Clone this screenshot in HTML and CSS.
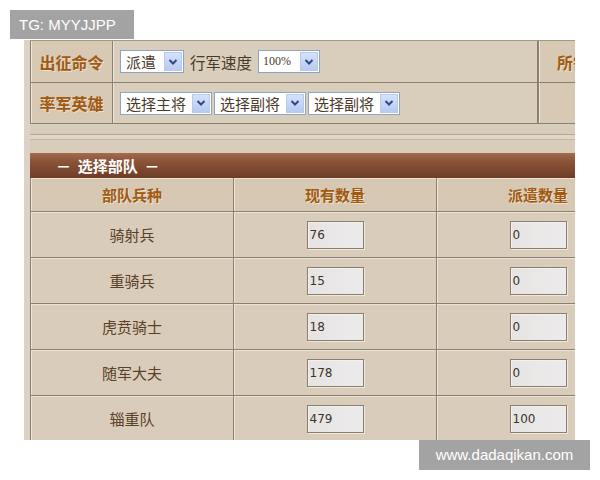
FILE: index.html
```html
<!DOCTYPE html>
<html lang="zh">
<head>
<meta charset="utf-8">
<title>出征</title>
<link rel="stylesheet" href="styles.css">
</head>
<body>
<div class="wm wm-top">TG: MYYJJPP</div>
<div class="shot">
  <div class="cmd">
    <div class="cmd-row r1">
      <div class="lab">出征命令</div>
      <div class="ctl">
        <div class="sel w64"><span class="sv">派遣</span><span class="arr"><svg width="10" height="8" viewBox="0 0 10 8"><path d="M1.5 2 L5 5.5 L8.5 2" fill="none" stroke="#2d4a86" stroke-width="2"/></svg></span></div>
        <span class="txt">行军速度</span>
        <div class="sel w62"><span class="sv small">100%</span><span class="arr"><svg width="10" height="8" viewBox="0 0 10 8"><path d="M1.5 2 L5 5.5 L8.5 2" fill="none" stroke="#2d4a86" stroke-width="2"/></svg></span></div>
      </div>
      <div class="lab side">所需</div>
    </div>
    <div class="cmd-row r2">
      <div class="lab">率军英雄</div>
      <div class="ctl tight">
        <div class="sel w92"><span class="sv">选择主将</span><span class="arr"><svg width="10" height="8" viewBox="0 0 10 8"><path d="M1.5 2 L5 5.5 L8.5 2" fill="none" stroke="#2d4a86" stroke-width="2"/></svg></span></div>
        <div class="sel w92"><span class="sv">选择副将</span><span class="arr"><svg width="10" height="8" viewBox="0 0 10 8"><path d="M1.5 2 L5 5.5 L8.5 2" fill="none" stroke="#2d4a86" stroke-width="2"/></svg></span></div>
        <div class="sel w92"><span class="sv">选择副将</span><span class="arr"><svg width="10" height="8" viewBox="0 0 10 8"><path d="M1.5 2 L5 5.5 L8.5 2" fill="none" stroke="#2d4a86" stroke-width="2"/></svg></span></div>
      </div>
      <div class="lab side"></div>
    </div>
  </div>
  <div class="band"><div class="band-line"></div></div>
  <div class="bar">－&nbsp;&nbsp;选择部队&nbsp;&nbsp;－</div>
  <div class="troops">
    <div class="th">部队兵种</div><div class="th">现有数量</div><div class="th">派遣数量</div>
    <div class="td name">骑射兵</div><div class="td"><span class="inp">76</span></div><div class="td"><span class="inp">0</span></div>
    <div class="td name">重骑兵</div><div class="td"><span class="inp">15</span></div><div class="td"><span class="inp">0</span></div>
    <div class="td name">虎贲骑士</div><div class="td"><span class="inp">18</span></div><div class="td"><span class="inp">0</span></div>
    <div class="td name">随军大夫</div><div class="td"><span class="inp">178</span></div><div class="td"><span class="inp">0</span></div>
    <div class="td name">辎重队</div><div class="td"><span class="inp">479</span></div><div class="td"><span class="inp">100</span></div>
  </div>
</div>
<div class="wm wm-bot">www.dadaqikan.com</div>
</body>
</html>
```
FILE: styles.css
```css
html, body {
  margin: 0;
  padding: 0;
  background: #ffffff;
  width: 600px;
  height: 480px;
  overflow: hidden;
  font-family: "Noto Sans CJK SC", "Liberation Sans", sans-serif;
}
body {
  position: relative;
}
.wm {
  position: absolute;
  background: #a3a3a3;
  color: #ffffff;
  font-family: "Liberation Sans", Arial, sans-serif;
  font-size: 15px;
  line-height: 30px;
  z-index: 5;
}
.wm-top {
  left: 10px;
  top: 10px;
  width: 124px;
  height: 29px;
  line-height: 29px;
  padding-left: 9px;
  box-sizing: border-box;
}
.wm-bot {
  left: 419px;
  top: 440px;
  width: 171px;
  height: 30px;
  text-align: center;
}
.shot {
  margin: 40px 0 0 24px;
  width: 551px;
  height: 400px;
  overflow: hidden;
  background: #ddd2c3;
  padding-left: 6px;
  box-sizing: border-box;
}
.cmd {
  width: 620px;
  border-top: 1px solid #a3978a;
}
.cmd-row {
  display: grid;
  grid-template-columns: 82px 425px 113px;
  border-bottom: 1px solid #8c8071;
  box-shadow: inset 0 1px 0 #eee6d9;
}
.r1 { height: 41px; }
.r2 { height: 40px; }
.lab {
  border-left: 1px solid #8c8071;
  box-shadow: inset 1px 0 0 #ede5d8;
  background: #d7c9b4;
  color: #a05a12;
  font-weight: bold;
  font-size: 16px;
  display: flex;
  align-items: center;
  justify-content: center;
  text-shadow: 1px 1px 0 #e9dfcf;
}
.lab.side {
  justify-content: flex-start;
  padding-left: 18px;
  border-left: 2px solid #8c8071;
}
.ctl {
  border-left: 1px solid #8c8071;
  box-shadow: inset 1px 0 0 #ede5d8;
  background: #d9cdbb;
  display: flex;
  align-items: center;
  padding-left: 7px;
  gap: 6px;
}
.ctl.tight { gap: 2px; }
.sel {
  height: 23px;
  box-sizing: border-box;
  border: 1px solid #8ea3c6;
  background: #ffffff;
  display: flex;
  align-items: center;
  justify-content: space-between;
  padding: 1px;
}
.w64 { width: 64px; }
.w62 { width: 62px; }
.w92 { width: 92px; }
.sv {
  color: #4a3a2a;
  font-size: 15px;
  padding-left: 4px;
  line-height: 19px;
}
.sv.small {
  font-family: "Liberation Serif", serif;
  font-size: 12px;
  padding-left: 3px;
}
.arr {
  width: 18px;
  height: 19px;
  background: linear-gradient(#d6e2fb, #b7caf1);
  border: 1px solid #b9c9ea;
  box-sizing: border-box;
  display: flex;
  align-items: center;
  justify-content: center;
}
.txt {
  color: #4a3a2a;
  font-size: 15.5px;
}
.band {
  height: 29px;
  background: #d8ccba;
  padding-top: 10px;
  box-sizing: border-box;
}
.band-line {
  height: 4px;
  border-top: 1px solid #b4a896;
  border-bottom: 1px solid #c2b6a4;
  background: #e0d6c8;
}
.bar {
  height: 25px;
  width: 620px;
  background: linear-gradient(#a36c4f 0%, #8a5338 35%, #6e3c26 100%);
  color: #ffffff;
  font-weight: bold;
  font-size: 15px;
  line-height: 25px;
  padding-left: 26px;
  box-sizing: border-box;
}
.troops {
  display: grid;
  grid-template-columns: 203px 203px 203px;
  grid-template-rows: 34px 46px 46px 46px 46px 46px;
  width: 609px;
}
.th, .td {
  border-left: 1px solid #8c8071;
  border-bottom: 1px solid #8c8071;
  box-shadow: inset 1px 1px 0 #ece4d6;
  background: #d9ccba;
  display: flex;
  align-items: center;
  justify-content: center;
  box-sizing: border-box;
}
.th {
  color: #a05a12;
  font-weight: bold;
  font-size: 15px;
  text-shadow: 1px 1px 0 #ebe1d2;
  background: #d6c8b2;
}
.td.name {
  color: #5a4028;
  font-size: 15px;
}
.inp {
  width: 57px;
  height: 28px;
  box-sizing: border-box;
  border: 1px solid #8a7e6f;
  box-shadow: inset 1px 1px 0 #f4f1ec, 1px 1px 0 #f0e8dc;
  background: linear-gradient(90deg, #e6e4e3, #ecebeb);
  color: #3e3328;
  font-family: "DejaVu Sans", sans-serif;
  font-size: 12px;
  line-height: 26px;
  padding-left: 2px;
}
```
